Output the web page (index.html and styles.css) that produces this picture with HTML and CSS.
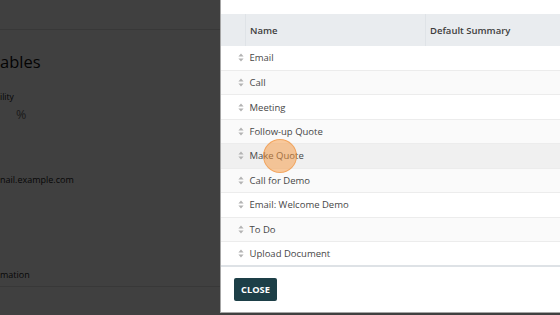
FILE: index.html
```html
<!DOCTYPE html>
<html>
<head>
<meta charset="utf-8">
<link rel="stylesheet" href="styles.css">
</head>
<body>
<div class="page">
  <div class="topbar"></div>
  <h1 class="title">ables</h1>
  <div class="label">ility</div>
  <div class="pct">%</div>
  <div class="email">nail.example.com</div>
  <div class="spacer"></div>
  <div class="section">mation</div>
</div>
<div class="overlay"></div>
<div class="modal">
  <div class="modal-body">
    <table class="list">
      <thead>
        <tr><th class="h-handle"></th><th class="h-name">Name</th><th>Default Summary</th></tr>
      </thead>
      <tbody>
        <tr><td class="handle"><svg width="6" height="9" viewBox="0 0 6 9"><path d="M3 0.5L5.6 3.6H0.4Z M3 8.5L5.6 5.4H0.4Z" fill="#b3b3b3"/></svg></td><td>Email</td><td></td></tr>
        <tr><td class="handle"><svg width="6" height="9" viewBox="0 0 6 9"><path d="M3 0.5L5.6 3.6H0.4Z M3 8.5L5.6 5.4H0.4Z" fill="#b3b3b3"/></svg></td><td>Call</td><td></td></tr>
        <tr><td class="handle"><svg width="6" height="9" viewBox="0 0 6 9"><path d="M3 0.5L5.6 3.6H0.4Z M3 8.5L5.6 5.4H0.4Z" fill="#b3b3b3"/></svg></td><td>Meeting</td><td></td></tr>
        <tr><td class="handle"><svg width="6" height="9" viewBox="0 0 6 9"><path d="M3 0.5L5.6 3.6H0.4Z M3 8.5L5.6 5.4H0.4Z" fill="#b3b3b3"/></svg></td><td>Follow-up Quote</td><td></td></tr>
        <tr class="hover"><td class="handle"><svg width="6" height="9" viewBox="0 0 6 9"><path d="M3 0.5L5.6 3.6H0.4Z M3 8.5L5.6 5.4H0.4Z" fill="#b3b3b3"/></svg></td><td>Make Quote</td><td></td></tr>
        <tr><td class="handle"><svg width="6" height="9" viewBox="0 0 6 9"><path d="M3 0.5L5.6 3.6H0.4Z M3 8.5L5.6 5.4H0.4Z" fill="#b3b3b3"/></svg></td><td>Call for Demo</td><td></td></tr>
        <tr><td class="handle"><svg width="6" height="9" viewBox="0 0 6 9"><path d="M3 0.5L5.6 3.6H0.4Z M3 8.5L5.6 5.4H0.4Z" fill="#b3b3b3"/></svg></td><td>Email: Welcome Demo</td><td></td></tr>
        <tr><td class="handle"><svg width="6" height="9" viewBox="0 0 6 9"><path d="M3 0.5L5.6 3.6H0.4Z M3 8.5L5.6 5.4H0.4Z" fill="#b3b3b3"/></svg></td><td>To Do</td><td></td></tr>
        <tr><td class="handle"><svg width="6" height="9" viewBox="0 0 6 9"><path d="M3 0.5L5.6 3.6H0.4Z M3 8.5L5.6 5.4H0.4Z" fill="#b3b3b3"/></svg></td><td>Upload Document</td><td></td></tr>
      </tbody>
    </table>
  </div>
  <div class="modal-footer">
    <button class="btn-close">CLOSE</button>
  </div>
</div>
<div class="click"></div>
</body>
</html>
```
FILE: styles.css
```css
html, body {
  margin: 0;
  padding: 0;
}
body {
  width: 560px;
  height: 315px;
  overflow: hidden;
  position: relative;
  background: #ffffff;
  font-family: "Open Sans", "Noto Sans", sans-serif;
  color: #212529;
}
.page {
  display: flex;
  flex-direction: column;
  align-items: flex-start;
  height: 315px;
}
.topbar {
  height: 29px;
  width: 221px;
  border-bottom: 1px solid #e0e0e0;
}
.title {
  margin: 20px 0 0 0;
  font-size: 16.5px;
  font-weight: 400;
  line-height: 24px;
  color: #111;
}
.label {
  margin-top: 16px;
  font-size: 8.5px;
  line-height: 14px;
  color: #111;
}
.pct {
  margin: 3px 0 0 16px;
  font-size: 12.5px;
  line-height: 16px;
  color: #6e6e6e;
}
.email {
  margin-top: 50px;
  font-size: 9px;
  line-height: 14px;
  color: #222;
}
.spacer {
  flex: 0 0 81px;
}
.section {
  font-size: 9px;
  line-height: 14px;
  color: #222;
  width: 221px;
  padding-bottom: 4px;
  border-bottom: 1px solid #e0e0e0;
}
.overlay {
  position: absolute;
  inset: 0;
  background: rgba(0, 0, 0, 0.75);
}
.modal {
  position: absolute;
  left: 220px;
  top: -1px;
  width: 400px;
  background: #ffffff;
  border: 1px solid rgba(0, 0, 0, 0.35);
  display: flex;
  flex-direction: column;
}
.modal-body {
  padding-top: 14px;
}
.list {
  border-collapse: collapse;
  width: 100%;
  font-size: 9.5px;
  color: #474747;
}
.list th {
  background: #e9ecef;
  height: 32px;
  padding: 0 4px;
  text-align: left;
  font-weight: 600;
  color: #3d3d3d;
  border-left: 1px solid #dfe3e7;
}
.list th:first-child {
  border-left: none;
}
.h-handle {
  width: 16px;
}
.h-name {
  width: 171px;
}
.list td {
  height: 24.44px;
  padding: 0 4px;
  border-top: 1px solid #ececec;
  box-sizing: border-box;
}
.list tbody tr:first-child td {
  border-top: none;
}
.list tbody tr:nth-child(even) {
  background: #fafafa;
}
.list tbody tr.hover {
  background: #f0f0f0;
}
.list td.handle {
  text-align: right;
  padding: 0 2px 0 0;
  line-height: 0;
}
.handle svg {
  vertical-align: middle;
}
.list tbody tr:last-child td {
  border-bottom: 2px solid #dee2e6;
}
.modal-footer {
  padding: 11px 12px 11px 13px;
}
.btn-close {
  background: #1d3f47;
  color: #ffffff;
  border: none;
  border-radius: 2px;
  font-family: "Open Sans", sans-serif;
  font-weight: 700;
  font-size: 9.3px;
  height: 23px;
  width: 43px;
  padding: 0;
  display: block;
}
.click {
  position: absolute;
  left: 263px;
  top: 139px;
  width: 34px;
  height: 34px;
  border-radius: 50%;
  background: rgba(246, 150, 60, 0.5);
  border: 1px solid rgba(240, 140, 50, 0.55);
  box-sizing: border-box;
}
```
